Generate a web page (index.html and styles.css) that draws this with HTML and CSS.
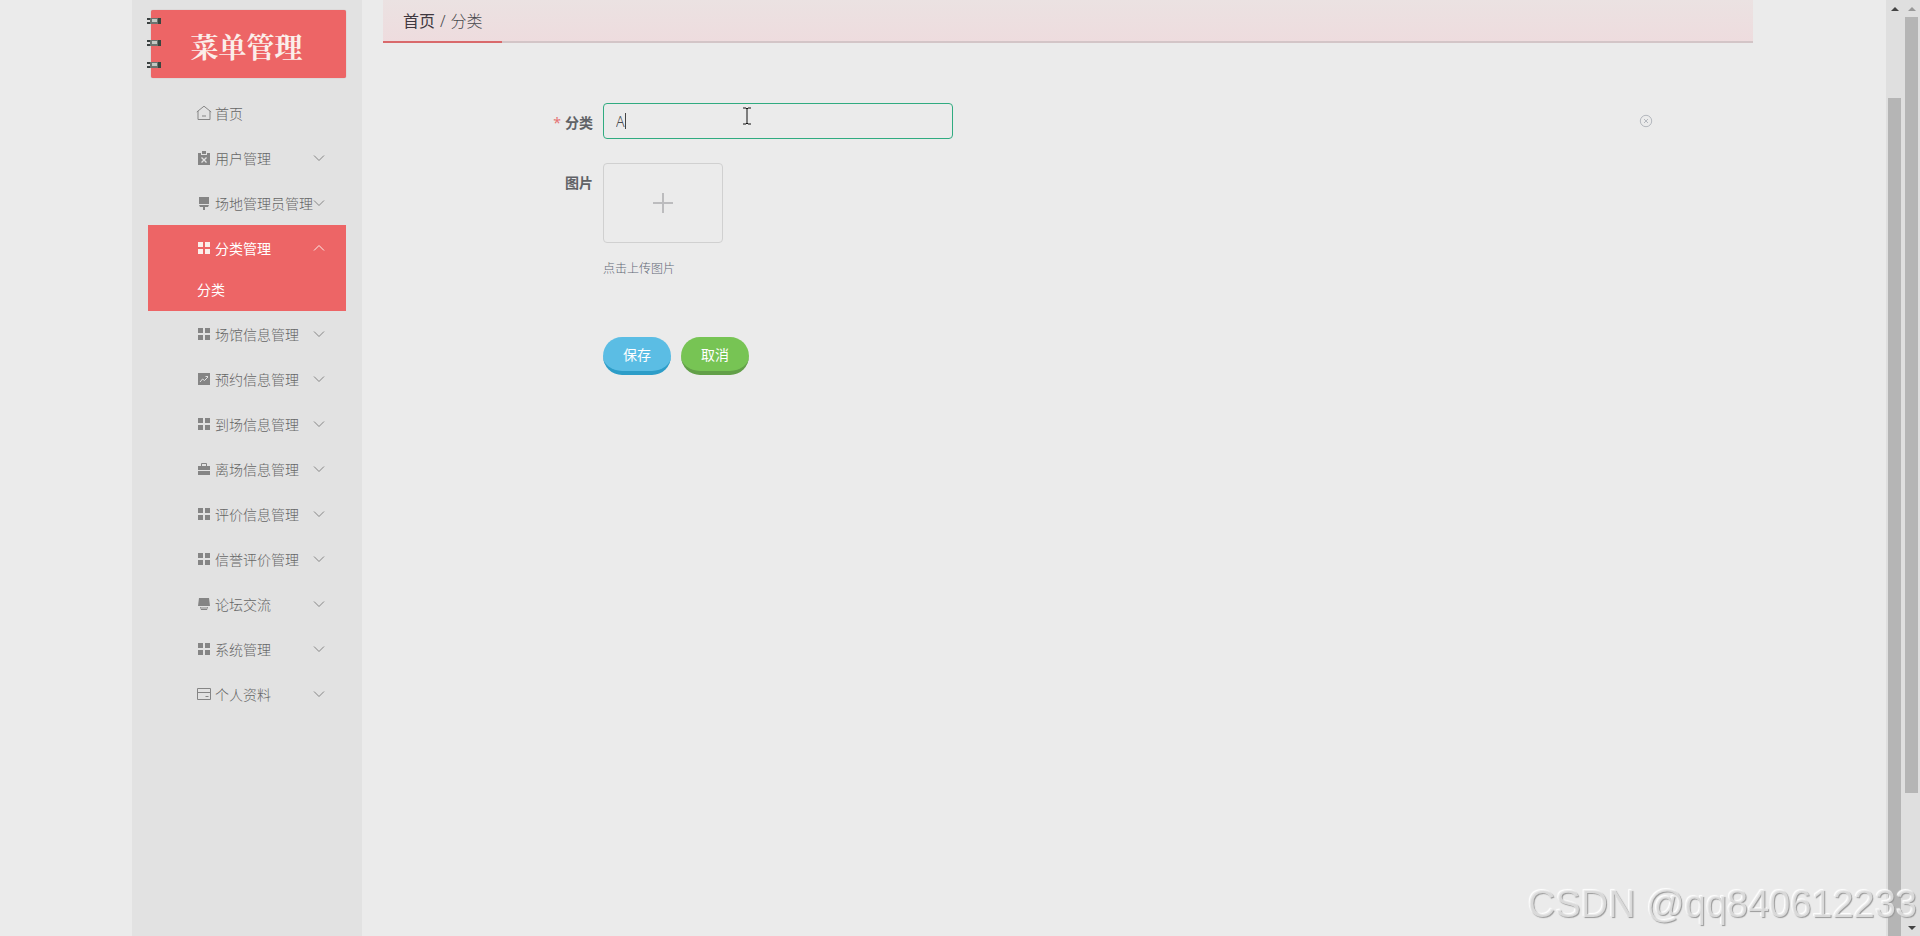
FILE: index.html
```html
<!DOCTYPE html>
<html lang="zh-CN">
<head>
    <meta charset="UTF-8">
    <meta name="viewport" content="width=device-width, initial-scale=1.0">
    <title>分类</title>
    <link rel="stylesheet" href="styles.css">
</head>
<body>
    <!-- icons -->
    <svg class="sprite" aria-hidden="true">
        <symbol id="i-home" viewBox="0 0 16 16"><path d="M.8 7 8 1.200 15.200 7M2 6v8.500h12V6M6 11h4" fill="none" stroke="currentColor"/></symbol>
        <symbol id="i-grid" viewBox="0 0 16 16"><path d="M2 2h5v5H2zM9 2h5v5H9zM2 9h5v5H2zM9 9h5v5H9z" fill="currentColor"/></symbol>
        <symbol id="i-user" viewBox="0 0 16 16"><path d="M2 3h3v2h6V3h3v12H2z" fill="currentColor"/><path d="M6 1h4v3H6z" fill="currentColor"/><path d="m5.500 7.500 5 5M10.500 7.500l-5 5" stroke="#e2e2e2" stroke-width="1.300"/></symbol>
        <symbol id="i-brush" viewBox="0 0 16 16"><path d="M3 2h10v7H3zM3 10h10l-1 2H9v3H7v-3H4z" fill="currentColor"/></symbol>
        <symbol id="i-chart" viewBox="0 0 16 16"><path d="M2 2h12v12H2z" fill="currentColor"/><path d="m4 11 2.500-3 2 1.500L12 6M9.500 5.500H12" fill="none" stroke="#e2e2e2"/></symbol>
        <symbol id="i-case" viewBox="0 0 16 16"><path d="M2 5h12v4H2zM2 10h12v4H2z" fill="currentColor"/><path d="M5.500 5V2.500h5V5" fill="none" stroke="currentColor"/></symbol>
        <symbol id="i-cup" viewBox="0 0 16 16"><path d="M3 2h10l1 8H2zM4 11h8l-1 3H5z" fill="currentColor"/><path d="M5 12h6" stroke="#e2e2e2"/></symbol>
        <symbol id="i-card" viewBox="0 0 16 16"><path d="M1.500 2.500h13v11h-13zM1.500 6.500h13M9.500 10.500h3" fill="none" stroke="currentColor"/></symbol>
        <symbol id="i-down" viewBox="0 0 12 12"><path d="m1 3.500 5 5 5-5" fill="none" stroke="currentColor"/></symbol>
        <symbol id="i-up" viewBox="0 0 12 12"><path d="m1 8.500 5-5 5 5" fill="none" stroke="currentColor"/></symbol>
        <symbol id="i-ring" viewBox="0 0 14 8"><path d="M0 1h3v2H0zM0 5h3v2H0z" fill="#3b4242"/><path d="M3 1h9v6H3z" fill="#6c7470"/><path d="M5 2h5v3H5z" fill="#c3c9c3"/><path d="M11 1h3v6h-3z" fill="#39463f"/></symbol>
    </svg>

    <aside class="sidebar">
        <div class="logo">
            <div class="rings">
                <svg><use href="#i-ring"/></svg>
                <svg><use href="#i-ring"/></svg>
                <svg><use href="#i-ring"/></svg>
            </div>
            菜单管理
        </div>
        <nav class="menu">
            <a class="item" href="#"><svg class="icon"><use href="#i-home"/></svg>首页</a>
            <button class="item" type="button"><svg class="icon"><use href="#i-user"/></svg>用户管理<svg class="arrow"><use href="#i-down"/></svg></button>
            <button class="item" type="button"><svg class="icon"><use href="#i-brush"/></svg>场地管理员管理<svg class="arrow"><use href="#i-down"/></svg></button>
            <div class="open">
                <button class="item" type="button"><svg class="icon"><use href="#i-grid"/></svg>分类管理<svg class="arrow"><use href="#i-up"/></svg></button>
                <a class="sub" href="#">分类</a>
            </div>
            <button class="item" type="button"><svg class="icon"><use href="#i-grid"/></svg>场馆信息管理<svg class="arrow"><use href="#i-down"/></svg></button>
            <button class="item" type="button"><svg class="icon"><use href="#i-chart"/></svg>预约信息管理<svg class="arrow"><use href="#i-down"/></svg></button>
            <button class="item" type="button"><svg class="icon"><use href="#i-grid"/></svg>到场信息管理<svg class="arrow"><use href="#i-down"/></svg></button>
            <button class="item" type="button"><svg class="icon"><use href="#i-case"/></svg>离场信息管理<svg class="arrow"><use href="#i-down"/></svg></button>
            <button class="item" type="button"><svg class="icon"><use href="#i-grid"/></svg>评价信息管理<svg class="arrow"><use href="#i-down"/></svg></button>
            <button class="item" type="button"><svg class="icon"><use href="#i-grid"/></svg>信誉评价管理<svg class="arrow"><use href="#i-down"/></svg></button>
            <button class="item" type="button"><svg class="icon"><use href="#i-cup"/></svg>论坛交流<svg class="arrow"><use href="#i-down"/></svg></button>
            <button class="item" type="button"><svg class="icon"><use href="#i-grid"/></svg>系统管理<svg class="arrow"><use href="#i-down"/></svg></button>
            <button class="item" type="button"><svg class="icon"><use href="#i-card"/></svg>个人资料<svg class="arrow"><use href="#i-down"/></svg></button>
        </nav>
    </aside>

    <main class="main">
        <div class="breadcrumb"><a href="#">首页</a><span class="sep">/</span><span>分类</span></div>

        <form class="form">
            <div class="row">
                <label class="required" for="type">分类</label>
                <div class="field">
                    <input id="type" type="text" value="A">
                    <span class="caret"></span>
                    <svg class="pointer" viewBox="0 0 8 18"><path d="M0 1h3l1 1 1-1h3M4 2v14M0 17h3l1-1 1 1h3" fill="none" stroke="#111"/></svg>
                    <button class="clear" type="button" aria-label="清空"><svg viewBox="0 0 14 14"><circle cx="7" cy="7" r="5.700"/><path d="m5 5 4 4M9 5 5 9"/></svg></button>
                </div>
            </div>
            <div class="row">
                <label for="pic">图片</label>
                <div>
                    <button class="upload" id="pic" type="button"><svg viewBox="0 0 20 20"><path d="M10 0v20M0 10h20"/></svg></button>
                    <div class="tip">点击上传图片</div>
                </div>
            </div>
            <div class="actions">
                <button class="btn save" type="button">保存</button>
                <button class="btn cancel" type="button">取消</button>
            </div>
        </form>
    </main>

    <div class="scroll inner"><div class="thumb"></div></div>
    <div class="scroll outer"><div class="thumb"></div></div>

    <div class="watermark">CSDN @qq840612233</div>
</body>
</html>
```

FILE: styles.css
```css
* {
    box-sizing: border-box;
}
body {
    display: flex;
    min-height: 100vh;
    margin: 0;
    padding-left: 132px;
    background: #ebebeb;
    color: #484a4e;
    font-family: "Noto Sans", "Noto Sans CJK SC", sans-serif;
    font-size: 14px;
    font-weight: 300;
}
a {
    color: inherit;
    text-decoration: none;
}
button, input {
    font: inherit;
    color: inherit;
    margin: 0;
}
.sprite {
    display: none;
}

/* sidebar */
.sidebar {
    flex: none;
    width: 230px;
    padding: 10px 16px;
    background: #e2e2e2;
}
.logo {
    position: relative;
    height: 68px;
    margin-left: 3px;
    padding-right: 4px;
    background: #ed6566;
    border-radius: 2px;
    box-shadow: 0 0 1px #b98a8a;
    color: #fbeeea;
    font-family: "Noto Serif CJK SC", "Noto Sans CJK SC", serif;
    font-size: 28px;
    font-weight: bold;
    line-height: 72px;
    text-align: center;
}
.rings {
    position: absolute;
    top: 7px;
    left: -4px;
    display: flex;
    flex-direction: column;
    gap: 14px;
}
.rings svg {
    width: 14px;
    height: 8px;
}
.menu {
    margin-top: 12px;
    color: #666;
}
.item {
    display: flex;
    align-items: center;
    width: 100%;
    height: 45px;
    padding: 0 21px 0 48px;
    border: none;
    background: none;
    white-space: nowrap;
    cursor: pointer;
}
.icon {
    flex: none;
    width: 16px;
    height: 16px;
    margin-right: 3px;
    color: #858585;
}
.arrow {
    flex: none;
    width: 12px;
    height: 12px;
    margin-left: auto;
    color: #858585;
}
.open {
    background: #ed6566;
    color: #fff;
    font-weight: 400;
}
.open .icon, .open .arrow {
    color: #fbeeea;
}
.sub {
    display: block;
    height: 41px;
    padding-left: 49px;
    line-height: 40px;
}

/* content */
.main {
    flex: 1;
    margin: 0 133px 0 21px;
}
.breadcrumb {
    position: relative;
    height: 43px;
    padding-left: 20px;
    background: linear-gradient(#ebe2e2, #eedcde);
    border-bottom: 2px solid #d3c5c7;
    font-size: 16px;
    line-height: 42px;
}
.breadcrumb::after {
    content: "";
    position: absolute;
    left: 0;
    bottom: -2px;
    width: 119px;
    height: 2px;
    background: #d9696b;
}
.breadcrumb a {
    color: #403840;
    font-weight: 400;
}
.sep {
    margin: 0 5px;
}
.form {
    padding: 60px 100px 0;
}
.row {
    display: flex;
    align-items: flex-start;
    margin-bottom: 20px;
}
.row label {
    flex: none;
    width: 120px;
    padding-right: 10px;
    color: #606266;
    font-weight: bold;
    line-height: 40px;
    text-align: right;
}
.required::before {
    content: "*";
    margin-right: 4px;
    color: #e57373;
    font-weight: normal;
}
.field {
    position: relative;
    display: flex;
    flex: 1;
    align-items: center;
    height: 36px;
}
.field input {
    width: 350px;
    height: 36px;
    padding: 0 12px;
    border: 1px solid #30ab80;
    border-radius: 4px;
    outline: none;
    background: none;
}
.caret {
    position: absolute;
    top: 10px;
    left: 22px;
    width: 1px;
    height: 16px;
    background: #444;
}
.pointer {
    position: absolute;
    top: 4px;
    left: 140px;
    width: 8px;
    height: 18px;
}
.clear {
    display: flex;
    margin-left: auto;
    padding: 0;
    border: none;
    background: none;
}
.clear svg {
    width: 14px;
    height: 14px;
    fill: none;
    stroke: #b4b8be;
}
.upload {
    display: flex;
    align-items: center;
    justify-content: center;
    width: 120px;
    height: 80px;
    padding: 0;
    border: 1px solid #d0d0d0;
    border-radius: 4px;
    background: none;
}
.upload svg {
    width: 20px;
    height: 20px;
    stroke: #bcbcbe;
    stroke-width: 2;
}
.tip {
    margin-top: 16px;
    color: #626976;
    font-size: 12px;
    line-height: 20px;
}
.actions {
    display: flex;
    gap: 10px;
    margin-top: 58px;
    padding-left: 120px;
}
.btn {
    width: 68px;
    height: 38px;
    padding: 0;
    border: none;
    border-bottom: 4px solid;
    border-radius: 19px;
    color: #fff;
    font-weight: 400;
}
.save {
    background: #5bbde4;
    border-color: #2d9dc8;
}
.cancel {
    background: #77c454;
    border-color: #629f48;
}

/* scroll bars */
.scroll {
    position: relative;
    flex: none;
    display: flex;
    flex-direction: column;
    width: 17px;
    padding: 17px 2px;
    background: #dfdfdf;
}
.scroll::before, .outer::after {
    content: "";
    position: absolute;
    left: 5px;
    border: 4px solid transparent;
    border-top-width: 0;
    border-bottom-color: #444;
    top: 7px;
}
.outer::before {
    border-bottom-color: #999;
}
.outer::after {
    top: auto;
    bottom: 6px;
    border-top: 4px solid #444;
    border-bottom-width: 0;
}
.thumb {
    background: #b5b5b5;
}
.inner {
    padding-bottom: 0;
}
.inner .thumb {
    flex: 1;
    margin-top: 81px;
}
.outer .thumb {
    height: 86%;
}
.watermark {
    position: fixed;
    right: 3px;
    bottom: 12px;
    color: rgba(232, 232, 232, 0.8);
    font-family: "Liberation Sans", Arial, sans-serif;
    font-size: 38px;
    font-weight: 400;
    line-height: 40px;
    text-shadow: 1px 1px 1px #999, -1px -1px 1px #fff;
}
```
